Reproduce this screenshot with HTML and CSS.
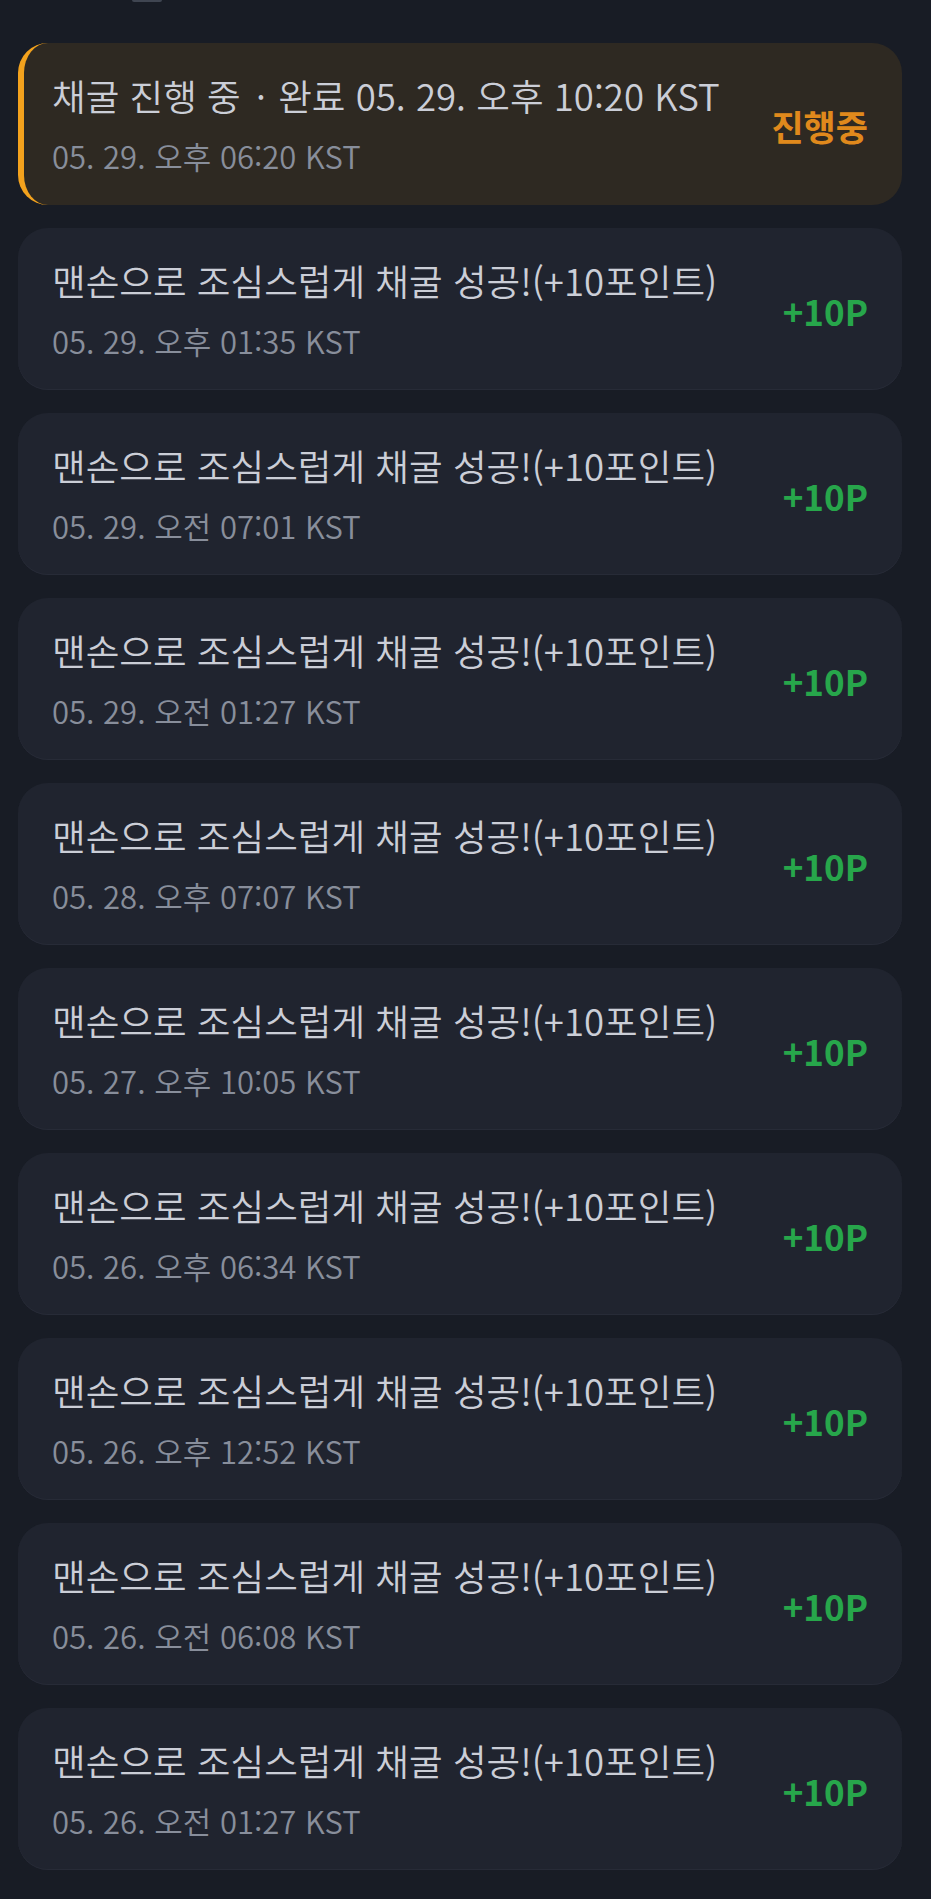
FILE: index.html
```html
<!DOCTYPE html>
<html lang="ko">
<head>
<meta charset="utf-8">
<title>채굴 기록</title>
<link rel="stylesheet" href="styles.css">
</head>
<body>
<div class="page">
  <div class="peek"><i class="peek-mark"></i></div>
  <ul class="list">
    <li class="card active">
      <div class="info">
        <div class="title">채굴 진행 중 <span class="sep">·</span> 완료 05. 29. 오후 10:20 KST</div>
        <div class="date">05. 29. 오후 06:20 KST</div>
      </div>
      <div class="status">진행중</div>
    </li>
    <li class="card">
      <div class="info">
        <div class="title">맨손으로 조심스럽게 채굴 성공!(+10포인트)</div>
        <div class="date">05. 29. 오후 01:35 KST</div>
      </div>
      <div class="points">+10P</div>
    </li>
    <li class="card">
      <div class="info">
        <div class="title">맨손으로 조심스럽게 채굴 성공!(+10포인트)</div>
        <div class="date">05. 29. 오전 07:01 KST</div>
      </div>
      <div class="points">+10P</div>
    </li>
    <li class="card">
      <div class="info">
        <div class="title">맨손으로 조심스럽게 채굴 성공!(+10포인트)</div>
        <div class="date">05. 29. 오전 01:27 KST</div>
      </div>
      <div class="points">+10P</div>
    </li>
    <li class="card">
      <div class="info">
        <div class="title">맨손으로 조심스럽게 채굴 성공!(+10포인트)</div>
        <div class="date">05. 28. 오후 07:07 KST</div>
      </div>
      <div class="points">+10P</div>
    </li>
    <li class="card">
      <div class="info">
        <div class="title">맨손으로 조심스럽게 채굴 성공!(+10포인트)</div>
        <div class="date">05. 27. 오후 10:05 KST</div>
      </div>
      <div class="points">+10P</div>
    </li>
    <li class="card">
      <div class="info">
        <div class="title">맨손으로 조심스럽게 채굴 성공!(+10포인트)</div>
        <div class="date">05. 26. 오후 06:34 KST</div>
      </div>
      <div class="points">+10P</div>
    </li>
    <li class="card">
      <div class="info">
        <div class="title">맨손으로 조심스럽게 채굴 성공!(+10포인트)</div>
        <div class="date">05. 26. 오후 12:52 KST</div>
      </div>
      <div class="points">+10P</div>
    </li>
    <li class="card">
      <div class="info">
        <div class="title">맨손으로 조심스럽게 채굴 성공!(+10포인트)</div>
        <div class="date">05. 26. 오전 06:08 KST</div>
      </div>
      <div class="points">+10P</div>
    </li>
    <li class="card">
      <div class="info">
        <div class="title">맨손으로 조심스럽게 채굴 성공!(+10포인트)</div>
        <div class="date">05. 26. 오전 01:27 KST</div>
      </div>
      <div class="points">+10P</div>
    </li>
  </ul>
</div>
</body>
</html>
```

FILE: styles.css
```css
html, body {
  margin: 0;
  padding: 0;
  background: #181c25;
}

body {
  font-family: "Noto Sans CJK KR", "Noto Sans", sans-serif;
  color: #c9ccd5;
}

.page {
  padding: 0 29px 40px 18px;
  overflow: hidden;
}

.peek {
  height: 43px;
}

.peek-mark {
  display: block;
  width: 30px;
  height: 2px;
  margin-left: 114px;
  background: #3f4551;
  border-radius: 0 0 2px 2px;
}

.list {
  list-style: none;
  margin: 0;
  padding: 0;
  display: flex;
  flex-direction: column;
  gap: 23px;
}

.card {
  box-sizing: border-box;
  height: 162px;
  display: flex;
  align-items: center;
  justify-content: space-between;
  padding: 0 34px 0 34px;
  background: #20242f;
  border-radius: 30px;
  box-shadow: inset 0 -1px 0 #272b37;
}

.card.active {
  background: #2e2922;
  border-left: 6px solid #f3a21d;
  padding-left: 28px;
  box-shadow: none;
}

.info {
  display: flex;
  flex-direction: column;
}

.title {
  font-size: 36.6px;
  line-height: 46px;
  font-weight: 350;
  color: #cbced7;
  white-space: nowrap;
}

.sep {
  padding: 0 2px 0 5px;
}

.date {
  margin-top: 18px;
  font-size: 31px;
  line-height: 38px;
  font-weight: 350;
  color: #888e9b;
  white-space: nowrap;
}

.points {
  font-size: 35px;
  line-height: 44px;
  font-weight: 700;
  color: #27a64b;
  padding-top: 3px;
}

.status {
  font-size: 35px;
  line-height: 44px;
  font-weight: 700;
  color: #e0891c;
  padding-top: 3px;
}
```
